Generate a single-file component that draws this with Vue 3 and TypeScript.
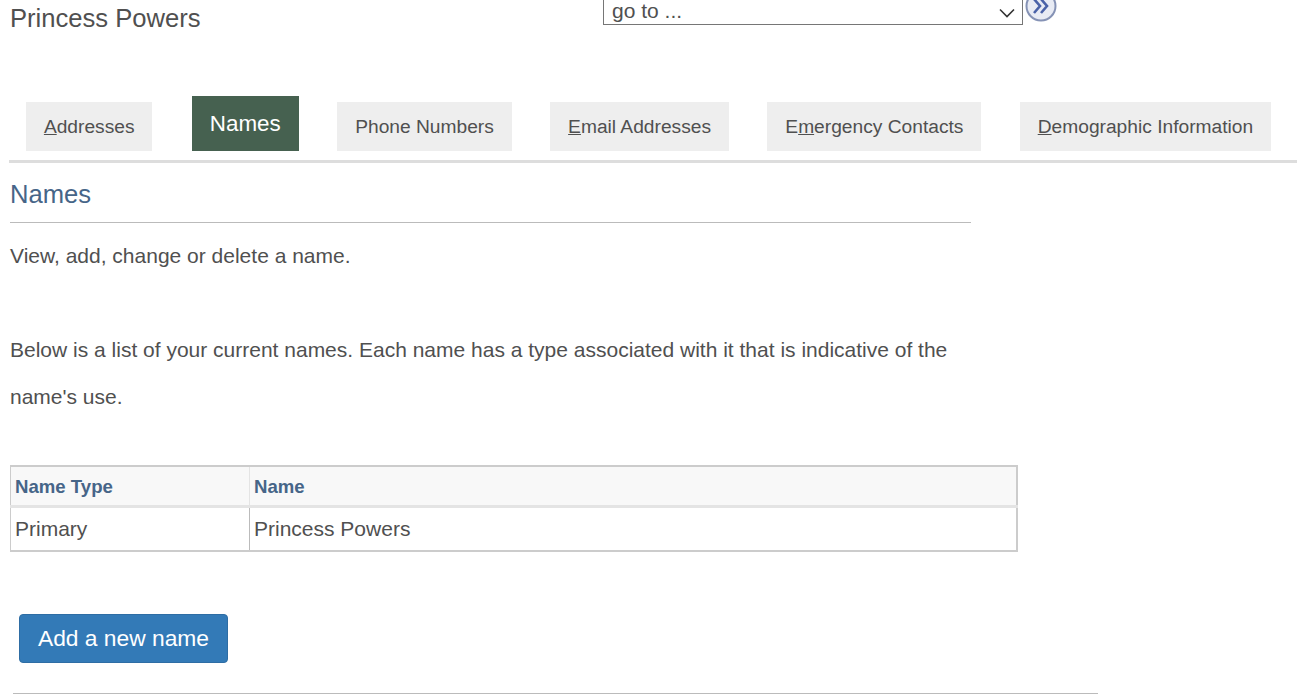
<script setup lang="ts">
interface Tab {
  key: string
  rest: string
  active?: boolean
  prefix?: string
}

const tabs: Tab[] = [
  { prefix: '', key: 'A', rest: 'ddresses' },
  { prefix: '', key: '', rest: 'Names', active: true },
  { prefix: '', key: '', rest: 'Phone Numbers' },
  { prefix: '', key: 'E', rest: 'mail Addresses' },
  { prefix: 'E', key: 'm', rest: 'ergency Contacts' },
  { prefix: '', key: 'D', rest: 'emographic Information' }
]
</script>

<template>
  <div class="page">
    <header class="top">
      <div class="person">Princess Powers</div>
      <form class="goto" @submit.prevent>
        <div class="goto-select">
          <span>go to ...</span>
          <svg class="chevron" width="16" height="10" viewBox="0 0 16 10">
            <path d="M1 1.500 8 8.500l7-7" fill="none" stroke="#333" stroke-width="1.600" />
          </svg>
        </div>
        <svg class="goto-btn" width="32" height="32" viewBox="0 0 32 32">
          <circle cx="16" cy="16" r="14.500" fill="#e8ebf4" stroke="#8592b5" stroke-width="2" />
          <path d="M9 9l6 7-6 7M16 9l6 7-6 7" fill="none" stroke="#4a62a8" stroke-width="2.600" />
        </svg>
      </form>
    </header>

    <nav class="tabs">
      <a v-for="tab in tabs" :key="tab.rest" class="tab" :class="{ active: tab.active }">{{ tab.prefix }}<u v-if="tab.key">{{ tab.key }}</u>{{ tab.rest }}</a>
    </nav>

    <h1 class="title">Names</h1>
    <div class="intro">
      <p class="lead">View, add, change or delete a name.</p>
      <p class="desc">Below is a list of your current names. Each name has a type associated with it that is indicative of the name's use.</p>
    </div>

    <table class="names">
      <thead>
        <tr>
          <th class="col-type">Name Type</th>
          <th>Name</th>
        </tr>
      </thead>
      <tbody>
        <tr>
          <td>Primary</td>
          <td>Princess Powers</td>
        </tr>
      </tbody>
    </table>

    <button type="button" class="add">Add a new name</button>
    <hr class="foot" />
  </div>
</template>

<style scoped>
.page {
  height: 695px;
  overflow: hidden;
  font-family: "Liberation Sans", Arial, sans-serif;
  color: #505050;
  box-sizing: border-box;
}

.top {
  display: flex;
  align-items: flex-start;
  height: 96px;
}

.person {
  width: 603px;
  padding: 4px 0 0 10px;
  box-sizing: border-box;
  font-size: 25.6px;
  line-height: 28px;
}

.goto {
  display: flex;
  align-items: flex-start;
  margin-top: -8px;
}

.goto-select {
  width: 420px;
  height: 33px;
  box-sizing: border-box;
  border: 1px solid #767676;
  display: flex;
  align-items: center;
  justify-content: space-between;
  padding: 5px 7px 0 8px;
  font-size: 21px;
}

.chevron {
  margin-top: 3px;
}

.goto-btn {
  margin: -2px 0 0 2px;
}

.tabs {
  display: flex;
  align-items: flex-end;
  gap: 38.500px;
  margin-left: 9px;
  width: 1288px;
  padding: 0 0 9px 17px;
  box-sizing: border-box;
  border-bottom: 3px solid #dddddd;
  height: 67px;
}

.tab {
  display: block;
  height: 49px;
  line-height: 49px;
  padding: 0 17.900px;
  background: #eeeeee;
  font-size: 19.2px;
  white-space: nowrap;
}

.tab.active {
  height: 55px;
  line-height: 55px;
  margin-left: 0.900px;
  padding: 0 18px;
  background: #466150;
  color: #ffffff;
  font-size: 22.4px;
}

.title {
  margin: 0 0 0 10px;
  width: 961px;
  height: 60px;
  box-sizing: border-box;
  border-bottom: 1px solid #bbbbbb;
  padding-top: 15px;
  font-size: 25.6px;
  line-height: 32px;
  font-weight: 400;
  color: #466588;
}

.intro {
  margin-left: 10px;
  width: 961px;
  font-size: 21px;
  line-height: 47px;
}

.lead {
  margin: 9px 0 47px;
}

.desc {
  margin: 0;
}

.names {
  margin: 45px 0 0 10px;
  width: 1008px;
  border: 2px solid #cccccc;
  border-left-width: 1px;
  border-collapse: collapse;
  font-size: 21px;
}

.names th {
  height: 40px;
  padding: 2px 4px 0;
  box-sizing: border-box;
  background: #f8f8f8;
  border-bottom: 3px solid #e4e4e4;
  border-right: 1px solid #e4e4e4;
  text-align: left;
  font-size: 18.6px;
  color: #466588;
}

.names td {
  height: 42px;
  padding: 0 4px;
  border-right: 1px solid #bbbbbb;
}

.col-type {
  width: 239px;
}

.add {
  display: block;
  margin: 62px 0 0 19px;
  width: 209px;
  height: 49px;
  padding: 1px 0 0;
  border: 1px solid #2e6da4;
  border-radius: 4px;
  background: #337ab7;
  color: #ffffff;
  font-family: inherit;
  font-size: 22.8px;
}

.foot {
  margin: 30px 0 0 13px;
  width: 1085px;
  height: 1px;
  border: 0;
  background: #bbbbbb;
}
</style>
